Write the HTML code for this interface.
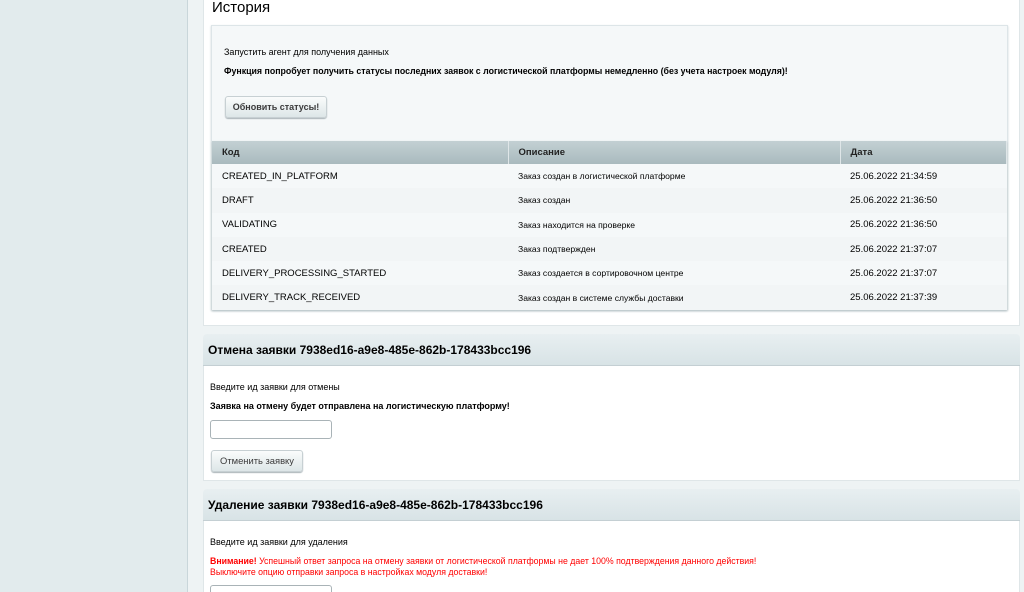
<!DOCTYPE html>
<html style="overflow:hidden;height:592px"><head><meta charset="utf-8"><style>
*{box-sizing:border-box;margin:0;padding:0}
body{width:1024px;height:592px;overflow:hidden;background:#eef3f4;font-family:"Liberation Sans",Arial,sans-serif;color:#000;position:relative}
.side{position:absolute;left:0;top:0;width:188px;height:592px;background:#e2ebed;border-right:1px solid #c9d6da}
.abs{position:absolute}
.panel{left:203px;width:817px;background:#fff;border:1px solid #dfe6e8}
.h1{left:212px;top:-1px;font-size:15px;color:#000}
.inner{left:211px;top:25px;width:797px;height:285px;background:#f5f8f9;border:1px solid #dde5e8;box-shadow:0 1px 2px #c9d3d6}
.t{font-size:9px;white-space:nowrap}
.btn{background:linear-gradient(#fafcfc,#dde6e8);border:1px solid #c7d0d3;border-radius:3px;box-shadow:0 1px 1px #aab4b8;font-size:9px;color:#3a3a3a;font-weight:bold;text-align:center;line-height:20px;height:22px}
table{border-collapse:collapse;font-size:9.5px}
th{height:23px;background:linear-gradient(#c3d0d3,#a9babe);text-align:left;padding-left:10px;font-weight:bold;color:#222;border-right:1px solid #dfe6e8}
td{height:24.3px;padding-left:10px}
tr:nth-child(odd) td{background:#f2f5f6}
.sh{left:203px;width:817px;height:32px;background:linear-gradient(#e8eff1,#d8e3e6);border-bottom:1px solid #c4cfd3;font-size:12px;font-weight:bold;padding-left:5px;line-height:32px;border-radius:4px 4px 0 0}
.inp{width:122px;height:19px;border:1px solid #a9b3b7;border-radius:3px;background:#fff}
.red{color:#f00}
</style></head><body>
<div class="side"></div>
<div class="abs panel" style="top:-2px;height:328px"></div>
<div class="abs h1">История</div>
<div class="abs inner"></div>
<div class="abs t" style="left:224px;top:47px">Запустить агент для получения данных</div>
<div class="abs t" style="left:224px;top:66px;font-weight:bold;font-size:8.8px">Функция попробует получить статусы последних заявок с логистической платформы немедленно (без учета настроек модуля)!</div>
<div class="abs btn" style="left:225px;top:96px;width:102px">Обновить статусы!</div>
<table class="abs" style="left:212px;top:141px;width:795px;box-shadow:0 1px 2px #b8c3c6">
<tr><th style="width:296px">Код</th><th style="width:332px">Описание</th><th>Дата</th></tr>
<tr><td>CREATED_IN_PLATFORM</td><td style="font-size:8.6px">Заказ создан в логистической платформе</td><td>25.06.2022 21:34:59</td></tr>
<tr><td>DRAFT</td><td style="font-size:8.6px">Заказ создан</td><td>25.06.2022 21:36:50</td></tr>
<tr><td>VALIDATING</td><td style="font-size:8.6px">Заказ находится на проверке</td><td>25.06.2022 21:36:50</td></tr>
<tr><td>CREATED</td><td style="font-size:8.6px">Заказ подтвержден</td><td>25.06.2022 21:37:07</td></tr>
<tr><td>DELIVERY_PROCESSING_STARTED</td><td style="font-size:8.6px">Заказ создается в сортировочном центре</td><td>25.06.2022 21:37:07</td></tr>
<tr><td>DELIVERY_TRACK_RECEIVED</td><td style="font-size:8.6px">Заказ создан в системе службы доставки</td><td>25.06.2022 21:37:39</td></tr>
</table>

<div class="abs sh" style="top:334px">Отмена заявки 7938ed16-a9e8-485e-862b-178433bcc196</div>
<div class="abs panel" style="top:366px;height:115px;border-top:none"></div>
<div class="abs t" style="left:210px;top:382px">Введите ид заявки для отмены</div>
<div class="abs t" style="left:210px;top:401px;font-weight:bold">Заявка на отмену будет отправлена на логистическую платформу!</div>
<div class="abs inp" style="left:210px;top:420px"></div>
<div class="abs btn" style="left:211px;top:450px;width:92px;font-weight:normal;font-size:9.4px">Отменить заявку</div>

<div class="abs sh" style="top:489px">Удаление заявки 7938ed16-a9e8-485e-862b-178433bcc196</div>
<div class="abs panel" style="top:521px;height:71px;border-top:none;border-bottom:none"></div>
<div class="abs t" style="left:210px;top:537px">Введите ид заявки для удаления</div>
<div class="abs t red" style="left:210px;top:556px;font-size:8.75px;line-height:11px"><b>Внимание!</b> Успешный ответ запроса на отмену заявки от логистической платформы не дает 100% подтверждения данного действия!<br>Выключите опцию отправки запроса в настройках модуля доставки!</div>
<div class="abs inp" style="left:210px;top:585px"></div>
</body></html>
